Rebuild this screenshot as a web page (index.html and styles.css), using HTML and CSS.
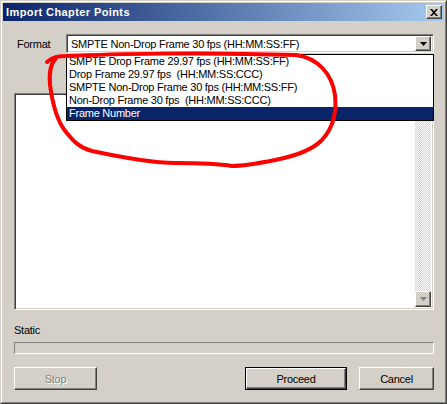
FILE: index.html
```html
<!DOCTYPE html>
<html>
<head>
<meta charset="utf-8">
<link rel="stylesheet" href="styles.css">
</head>
<body>
<div class="window">
  <div class="frame">
    <div class="titlebar">
      <span class="title">Import Chapter Points</span>
      <span class="close raised">
        <svg width="8" height="7" viewBox="0 0 8 7"><path d="M0 0h2l2 2.2L6 0h2L5 3.5 8 7H6L4 4.8 2 7H0l3-3.5z" fill="#000"/></svg>
      </span>
    </div>
    <div class="body">
      <div class="format-row">
        <span class="lbl">Format</span>
        <div class="combo sunken">
          <span class="combo-text">SMPTE Non-Drop Frame 30 fps (HH:MM:SS:FF)</span>
          <span class="arrow-btn raised">
            <svg width="7" height="4" viewBox="0 0 7 4"><path d="M0 0h7L3.5 4z" fill="#000"/></svg>
          </span>
        </div>
      </div>
      <div class="listbox sunken">
        <div class="lb-content"></div>
        <div class="vscroll">
          <div class="track"></div>
          <div class="sb-btn raised">
            <svg width="7" height="4" viewBox="0 0 7 4"><path d="M0 0h7L3.5 4z" fill="#808080"/></svg>
          </div>
        </div>
      </div>
      <div class="static">Static</div>
      <div class="progress"></div>
      <div class="buttons">
        <button class="btn raised disabled">Stop</button>
        <div class="spacer"></div>
        <button class="btn default"><span class="btn-inner raised">Proceed</span></button>
        <button class="btn raised">Cancel</button>
      </div>
    </div>
  </div>
  <ul class="dropdown">
    <li>SMPTE Drop Frame 29.97 fps (HH:MM:SS:FF)</li>
    <li>Drop Frame 29.97 fps&nbsp; (HH:MM:SS:CCC)</li>
    <li>SMPTE Non-Drop Frame 30 fps (HH:MM:SS:FF)</li>
    <li>Non-Drop Frame 30 fps&nbsp; (HH:MM:SS:CCC)</li>
    <li class="sel">Frame Number</li>
  </ul>
  <svg class="scribble" width="447" height="404" viewBox="0 0 447 404">
    <path d="M47 62 C52 57 58 56 68 56 C110 54 200 52 296 55 C318 58 332 74 335 95 C337 114 333 128 322 140 C312 150 296 156 275 160 C255 164 245 166 232 166 C215 163 195 163 175 163 C150 163 120 157 92 151 C80 148 74 142 66 132 C56 120 52 100 50 85 C49 74 50 64 56 58"
      fill="none" stroke="#f00" stroke-width="4" stroke-linecap="round" stroke-linejoin="round"/>
  </svg>
</div>
</body>
</html>
```
FILE: styles.css
```css
* { box-sizing: border-box; }
html, body { margin: 0; padding: 0; background: #D4D0C8; }
body {
  font-family: "Liberation Sans", Arial, sans-serif;
  font-size: 11px;
  letter-spacing: -0.25px;
  color: #000;
}
.window {
  position: relative;
  width: 447px;
  height: 404px;
  border: 1px solid;
  border-color: #D4D0C8 #404040 #404040 #D4D0C8;
  background: #D4D0C8;
}
.frame {
  height: 100%;
  border: 1px solid;
  border-color: #fff #808080 #808080 #fff;
  padding: 1px;
  display: flex;
  flex-direction: column;
}
.raised {
  border: 1px solid;
  border-color: #fff #404040 #404040 #fff;
  box-shadow: inset -1px -1px 0 #808080, inset 1px 1px 0 #D4D0C8;
  background: #D4D0C8;
}
.sunken {
  border: 1px solid;
  border-color: #808080 #fff #fff #808080;
  box-shadow: inset 1px 1px 0 #404040, inset -1px -1px 0 #D4D0C8;
}
.titlebar {
  height: 18px;
  flex: none;
  background: linear-gradient(to right, #0A246A, #A6CAF0);
  display: flex;
  align-items: center;
  padding: 0 2px 0 3px;
}
.title {
  flex: 1;
  color: #fff;
  font-weight: bold;
  font-size: 11px;
  letter-spacing: 0.4px;
}
.close {
  width: 16px;
  height: 14px;
  display: flex;
  align-items: center;
  justify-content: center;
}
.body {
  flex: 1;
  display: flex;
  flex-direction: column;
  padding: 0 10px 0 11px;
}
.format-row {
  margin-top: 13px;
  height: 19px;
  display: flex;
  align-items: center;
}
.lbl {
  width: 52px;
  padding-left: 3px;
}
.combo {
  width: 368px;
  height: 19px;
  background: #fff;
  display: flex;
  align-items: center;
  padding: 2px;
}
.combo-text {
  flex: 1;
  padding-left: 2px;
}
.arrow-btn {
  width: 16px;
  height: 15px;
  display: flex;
  align-items: center;
  justify-content: center;
}
.listbox {
  margin-top: 40px;
  height: 217px;
  width: 420px;
  background: #fff;
  display: flex;
  padding: 2px;
}
.lb-content { flex: 1; }
.vscroll {
  width: 16px;
  display: flex;
  flex-direction: column;
}
.track {
  flex: 1;
  background: repeating-conic-gradient(#fff 0 25%, #D4D0C8 0 50%) 0 0 / 2px 2px;
}
.sb-btn {
  height: 16px;
  display: flex;
  align-items: center;
  justify-content: center;
}
.static {
  margin-top: 14px;
  height: 13px;
  line-height: 13px;
}
.progress {
  margin-top: 5px;
  height: 12px;
  width: 420px;
  border: 1px solid;
  border-color: #808080 #fff #fff #808080;
}
.buttons {
  margin-top: 13px;
  height: 23px;
  display: flex;
}
.btn {
  font: inherit;
  letter-spacing: inherit;
  height: 23px;
  padding: 0;
  margin: 0;
  color: #000;
}
.btn.disabled {
  width: 83px;
  color: #808080;
  text-shadow: 1px 1px 0 #fff;
}
.spacer { flex: 1; }
.btn.default {
  width: 102px;
  border: 1px solid #000;
  background: #D4D0C8;
  margin-right: 12px;
}
.btn-inner {
  display: flex;
  height: 100%;
  align-items: center;
  justify-content: center;
}
.btn.raised:not(.disabled) { width: 75px; }
.dropdown {
  position: absolute;
  left: 65px;
  top: 53px;
  width: 368px;
  height: 67px;
  margin: 0;
  padding: 0;
  list-style: none;
  background: #fff;
  border: 1px solid #000;
}
.dropdown li {
  height: 13px;
  line-height: 13px;
  padding-left: 2px;
  white-space: nowrap;
}
.dropdown li.sel {
  background: #0A246A;
  color: #fff;
}
.scribble {
  position: absolute;
  left: -1px;
  top: -1px;
  pointer-events: none;
}
```
